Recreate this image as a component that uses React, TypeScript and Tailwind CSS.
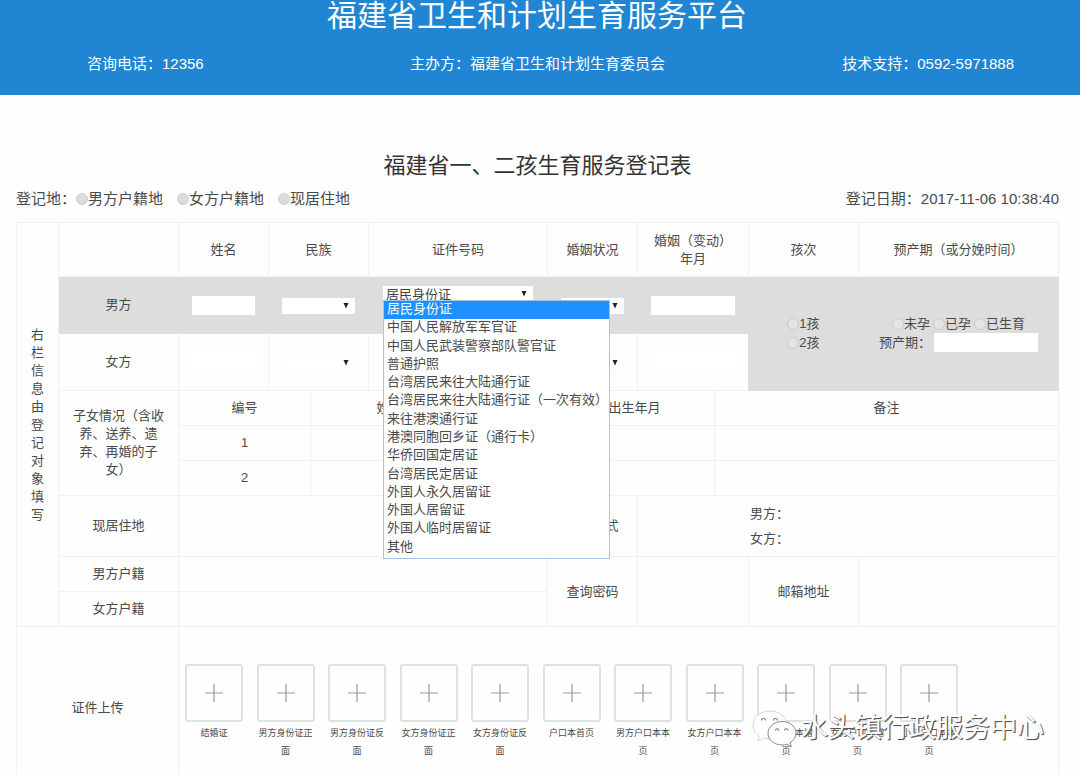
import React, { useState } from "react";

const COLUMNS = [42, 120, 90, 42, 58, 100, 79, 7, 83, 77, 34, 110, 200];

const ID_TYPES = [
  "居民身份证",
  "中国人民解放军军官证",
  "中国人民武装警察部队警官证",
  "普通护照",
  "台湾居民来往大陆通行证",
  "台湾居民来往大陆通行证（一次有效）",
  "来往港澳通行证",
  "港澳同胞回乡证（通行卡）",
  "华侨回国定居证",
  "台湾居民定居证",
  "外国人永久居留证",
  "外国人居留证",
  "外国人临时居留证",
  "其他",
];

const UPLOADS = [
  "结婚证",
  "男方身份证正面",
  "男方身份证反面",
  "女方身份证正面",
  "女方身份证反面",
  "户口本首页",
  "男方户口本本页",
  "女方户口本本页",
  "男方户口本增页",
  "女方户口本增页",
  "小孩户口本本页",
];

type CellProps = React.TdHTMLAttributes<HTMLTableCellElement> & { tone?: string };

function Cell({ className = "", tone = "border-[#edf2f2]", ...rest }: CellProps) {
  return <td className={`border p-0 text-center align-middle ${tone} ${className}`} {...rest} />;
}

function Head({ className = "", ...rest }: React.ThHTMLAttributes<HTMLTableCellElement>) {
  return (
    <th
      className={`border border-[#edf2f2] p-0 text-center align-middle font-normal ${className}`}
      {...rest}
    />
  );
}

const GREY = "border-[#dedede] bg-[#dddddd]";

function Field({ label, className }: { label: string; className: string }) {
  return <input type="text" aria-label={label} className={`bg-white px-1 outline-none ${className}`} />;
}

function Picker({ label, className, options }: { label: string; className: string; options: string[] }) {
  return (
    <div className={`relative inline-block align-middle ${className}`}>
      <select
        aria-label={label}
        className="block h-full w-full appearance-none bg-white pl-[3px] text-[13px] leading-[18px] text-[#444] outline-none"
      >
        {options.map((o) => (
          <option key={o}>{o}</option>
        ))}
      </select>
      <svg viewBox="0 0 6 6" className="pointer-events-none absolute top-[5px] right-[6px] h-[6px] w-[6px]">
        <path d="M0.500 0H5.500L3 5.500Z" fill="#222" />
      </svg>
    </div>
  );
}

function Radio({ name, label, faint }: { name: string; label: string; faint?: boolean }) {
  return (
    <label className="inline-flex items-center">
      <input
        type="radio"
        name={name}
        className={`h-3 w-3 appearance-none rounded-full border ${
          faint ? "border-[#c9c9c9] bg-[#e4e4e4]" : "border-[#cfcfcf] bg-[#dcdcdc]"
        } checked:border-[#1e90ff] checked:bg-[#1e90ff]`}
      />
      <span>{label}</span>
    </label>
  );
}

function IdTypeMenu({ value, onPick }: { value: string; onPick: (v: string) => void }) {
  return (
    <ul
      role="listbox"
      aria-label="证件类型选项"
      className="absolute top-[14px] left-0 z-10 flex h-[259px] w-[227px] flex-col border border-[#a9c4e2] bg-white pb-px text-left text-[13px] leading-4"
    >
      {ID_TYPES.map((t) => (
        <li
          key={t}
          role="option"
          aria-selected={t === value}
          onClick={() => onPick(t)}
          className={`flex-1 pl-[3px] whitespace-nowrap ${t === value ? "bg-[#1e90ff] text-white" : ""}`}
        >
          {t}
        </li>
      ))}
    </ul>
  );
}

function IdTypeSelect() {
  const [value, setValue] = useState(ID_TYPES[0]);
  return (
    <div className="relative ml-[14px] h-[38px] w-[150px] text-left">
      <select
        aria-label="男方证件类型"
        value={value}
        onChange={(e) => setValue(e.target.value)}
        className="block h-[18px] w-full appearance-none bg-white pl-[3px] text-[13px] leading-[18px] text-[#444] outline-none"
      >
        {ID_TYPES.map((o) => (
          <option key={o}>{o}</option>
        ))}
      </select>
      <svg viewBox="0 0 6 6" className="pointer-events-none absolute top-[5px] right-[6px] h-[6px] w-[6px]">
        <path d="M0.500 0H5.500L3 5.500Z" fill="#222" />
      </svg>
      <IdTypeMenu value={value} onPick={setValue} />
    </div>
  );
}

function Watermark() {
  return (
    <div className="absolute right-9 bottom-[27px] flex items-center gap-[3px]">
      <svg viewBox="0 0 46 40" className="h-10 w-[46px]" aria-hidden="true">
        <g strokeWidth="1" strokeLinejoin="round">
          <path
            d="M18 3C8.500 3 1 9.200 1 17c0 4.500 2.400 8.300 6.200 10.900L5.800 33l5.700-3c2 .6 4.200 1 6.500 1 9.500 0 17-6.200 17-14S27.500 3 18 3Z"
            fill="#fff"
            stroke="#d4d4d4"
          />
          <path
            d="M30 13.500c-7.900 0-14 5.300-14 11.700C16 31.700 22.100 37 30 37c1.700 0 3.300-.3 4.800-.7l4.500 2.400-1.200-4.100c3.600-2.100 5.900-5.600 5.900-9.400 0-6.400-6.100-11.700-14-11.700Z"
            fill="#fff"
            stroke="#8a8a8a"
          />
        </g>
        <g fill="none" stroke="#777" strokeWidth="1.100">
          <path d="M9.500 12.500a2 2 0 0 1 4 0M21.500 12.500a2 2 0 0 1 4 0M23.500 22.500a1.700 1.700 0 0 1 3.400 0M32.500 22.500a1.700 1.700 0 0 1 3.400 0" />
        </g>
      </svg>
      <span className="text-[27px] leading-9 whitespace-nowrap text-white [text-shadow:1px_1px_1px_#555,1px_1px_0_#777]">
        水头镇行政服务中心
      </span>
    </div>
  );
}

export default function App() {
  return (
    <div
      lang="zh-CN"
      className="relative h-screen overflow-hidden bg-[#fefefe] text-[#4a4a4a] [font-family:'Liberation_Sans','Noto_Sans_CJK_SC',sans-serif]"
    >
      <header className="h-[95px] bg-[#2085d2] text-white">
        <h1 className="pr-[6px] text-center text-[30px] leading-8">福建省卫生和计划生育服务平台</h1>
        <div className="grid grid-cols-[1fr_auto_1fr] pt-5 pr-[5px] text-[15px] leading-6">
          <span className="pl-[87px]">咨询电话：12356</span>
          <span>主办方：福建省卫生和计划生育委员会</span>
          <span className="pr-[61px] text-right">技术支持：0592-5971888</span>
        </div>
      </header>

      <main className="pt-[55px] pr-[21px] pl-4">
        <h2 className="text-center text-[22px] leading-8 text-[#333]">福建省一、二孩生育服务登记表</h2>
        <div className="mb-[11px] flex items-center justify-between pt-[5px] text-[15px] leading-6">
          <div className="flex items-center">
            <span>登记地：</span>
            <div className="flex gap-[14px]">
              <Radio name="place" label="男方户籍地" />
              <Radio name="place" label="女方户籍地" />
              <Radio name="place" label="现居住地" />
            </div>
          </div>
          <span>登记日期：2017-11-06 10:38:40</span>
        </div>

        <table className="w-full table-fixed border-collapse text-[13px] leading-[18px]">
          <colgroup>
            {COLUMNS.map((w, i) => (
              <col key={i} style={{ width: `${(w / 1042) * 100}%` }} />
            ))}
          </colgroup>
          <tbody>
            <tr className="h-[54px]">
              <Head rowSpan={9}>
                <div className="mx-auto w-[13px]">右栏信息由登记对象填写</div>
              </Head>
              <Head />
              <Head>姓名</Head>
              <Head colSpan={2}>民族</Head>
              <Head colSpan={2}>证件号码</Head>
              <Head colSpan={2}>婚姻状况</Head>
              <Head colSpan={2}>
                婚姻（变动）
                <br />
                年月
              </Head>
              <Head>孩次</Head>
              <Head>预产期（或分娩时间）</Head>
            </tr>
            <tr className="h-[57px]">
              <Cell tone={GREY}>男方</Cell>
              <Cell tone={GREY}>
                <Field label="男方姓名" className="h-[19px] w-[63px] align-middle" />
              </Cell>
              <Cell tone={GREY} colSpan={2}>
                <Picker label="男方民族" className="h-4 w-[73px]" options={[""]} />
              </Cell>
              <Cell tone={GREY} colSpan={2}>
                <IdTypeSelect />
              </Cell>
              <Cell tone={GREY} colSpan={2}>
                <Picker label="男方婚姻状况" className="h-4 w-[63px]" options={[""]} />
              </Cell>
              <Cell tone={GREY} colSpan={2}>
                <Field label="男方婚姻变动年月" className="h-[19px] w-[84px] align-middle" />
              </Cell>
              <Cell tone={GREY} rowSpan={2}>
                <div className="flex flex-col items-center gap-px">
                  <Radio name="order" label="1孩" faint />
                  <Radio name="order" label="2孩" faint />
                </div>
              </Cell>
              <Cell tone={GREY} rowSpan={2}>
                <div className="flex justify-center gap-[3px]">
                  <Radio name="state" label="未孕" faint />
                  <Radio name="state" label="已孕" faint />
                  <Radio name="state" label="已生育" faint />
                </div>
                <label className="flex items-center justify-center">
                  预产期：
                  <input type="text" className="ml-[3px] h-[19px] w-[104px] bg-white px-1 outline-none" />
                </label>
              </Cell>
            </tr>
            <tr className="h-[57px]">
              <Cell>女方</Cell>
              <Cell>
                <Field label="女方姓名" className="h-[19px] w-[63px] align-middle" />
              </Cell>
              <Cell colSpan={2}>
                <Picker label="女方民族" className="h-4 w-[73px]" options={[""]} />
              </Cell>
              <Cell colSpan={2} />
              <Cell colSpan={2}>
                <Picker label="女方婚姻状况" className="h-4 w-[63px]" options={[""]} />
              </Cell>
              <Cell colSpan={2}>
                <Field label="女方婚姻变动年月" className="h-[19px] w-[84px] align-middle" />
              </Cell>
            </tr>
            <tr className="h-[35px]">
              <Cell rowSpan={3}>
                <div className="px-3">子女情况（含收养、送养、遗弃、再婚的子女）</div>
              </Cell>
              <Cell colSpan={2}>编号</Cell>
              <Cell colSpan={2}>姓名</Cell>
              <Cell colSpan={2}>性别</Cell>
              <Cell colSpan={2}>出生年月</Cell>
              <Cell colSpan={3}>备注</Cell>
            </tr>
            {["1", "2"].map((n) => (
              <tr key={n} className="h-[35px]">
                <Cell colSpan={2}>{n}</Cell>
                <Cell colSpan={2} />
                <Cell colSpan={2} />
                <Cell colSpan={2} />
                <Cell colSpan={3} />
              </tr>
            ))}
            <tr className="h-[61px]">
              <Cell>现居住地</Cell>
              <Cell colSpan={5} />
              <Cell colSpan={2}>联系方式</Cell>
              <Cell colSpan={4}>
                <div className="flex flex-col items-center gap-[6px]">
                  <label className="flex items-center">
                    男方：
                    <input type="text" className="h-[19px] w-[157px] bg-transparent px-1 outline-none" />
                  </label>
                  <label className="flex items-center">
                    女方：
                    <input type="text" className="h-[19px] w-[157px] bg-transparent px-1 outline-none" />
                  </label>
                </div>
              </Cell>
            </tr>
            <tr className="h-[35px]">
              <Cell>男方户籍</Cell>
              <Cell colSpan={5} />
              <Cell colSpan={2} rowSpan={2}>
                查询密码
              </Cell>
              <Cell colSpan={2} rowSpan={2} />
              <Cell rowSpan={2}>邮箱地址</Cell>
              <Cell rowSpan={2} />
            </tr>
            <tr className="h-[35px]">
              <Cell>女方户籍</Cell>
              <Cell colSpan={5} />
            </tr>
            <tr className="h-[162px]">
              <Cell colSpan={2}>证件上传</Cell>
              <Cell colSpan={11}>
                <div className="flex items-start justify-between pt-2 pr-[100px] pl-[6px]">
                  {UPLOADS.map((name) => (
                    <button key={name} type="button" className="flex w-[58px] flex-col items-center">
                      <span className="flex h-[58px] w-[58px] items-center justify-center rounded-[3px] border-2 border-[#dfe2e2]">
                        <svg viewBox="0 0 18 18" className="h-[18px] w-[18px]" aria-hidden="true">
                          <path d="M9 0V18M0 9H18" stroke="#999" strokeWidth="1.200" />
                        </svg>
                      </span>
                      <span className="mt-[2px] h-9 w-[57px] text-[9px] leading-[18px]">{name}</span>
                    </button>
                  ))}
                </div>
              </Cell>
            </tr>
          </tbody>
        </table>
      </main>

      <Watermark />
    </div>
  );
}
